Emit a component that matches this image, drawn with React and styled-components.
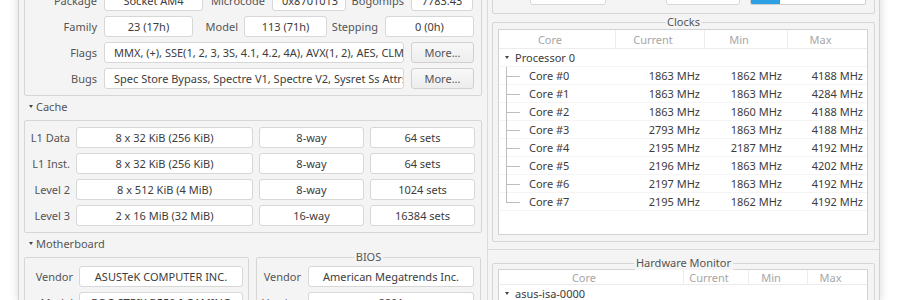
import React from "react";
import styled, { createGlobalStyle } from "styled-components";

const GlobalStyle = createGlobalStyle`
  html, body {
    margin: 0;
    padding: 0;
    background: #ffffff;
    overflow: hidden;
  }
  body {
    font-family: "Noto Sans", "Open Sans", sans-serif;
    font-size: 11px;
    color: #3c3c3c;
  }
  * {
    box-sizing: border-box;
  }
`;

const clocks = [
  ["Core #0", "1863 MHz", "1862 MHz", "4188 MHz"],
  ["Core #1", "1863 MHz", "1863 MHz", "4284 MHz"],
  ["Core #2", "1863 MHz", "1860 MHz", "4188 MHz"],
  ["Core #3", "2793 MHz", "1863 MHz", "4188 MHz"],
  ["Core #4", "2195 MHz", "2187 MHz", "4192 MHz"],
  ["Core #5", "2196 MHz", "1863 MHz", "4202 MHz"],
  ["Core #6", "2197 MHz", "1863 MHz", "4192 MHz"],
  ["Core #7", "2195 MHz", "1862 MHz", "4192 MHz"],
];

const cache = [
  ["L1 Data", "8 x 32 KiB (256 KiB)", "8-way", "64 sets"],
  ["L1 Inst.", "8 x 32 KiB (256 KiB)", "8-way", "64 sets"],
  ["Level 2", "8 x 512 KiB (4 MiB)", "8-way", "1024 sets"],
  ["Level 3", "2 x 16 MiB (32 MiB)", "16-way", "16384 sets"],
];

const clockCols = [116, 89, 83, 80];
const hwCols = [184, 65, 59, 60];

const Window = styled.div`
  margin: -38px 0 0 18px;
  width: 862px;
  height: 340px;
  background: #f4f4f4;
  border: 1px solid #d2d2d2;
  box-shadow: 0 0 9px rgba(0, 0, 0, 0.16);
  display: flex;
  align-items: flex-start;
`;

const LeftCol = styled.div`
  width: 468px;
  padding: 19px 5px 0 5px;
  display: flex;
  flex-direction: column;

  & > * {
    flex: none;
  }
`;

const RightCol = styled.div`
  width: 392px;
  align-self: stretch;
  border-left: 1px solid #dcdcdc;
  display: flex;
  flex-direction: column;

  & > * {
    flex: none;
  }
`;

const Section = styled.div`
  padding: ${(p) => p.$pad};
  border-bottom: ${(p) => (p.$line ? "1px solid #d8d8d8" : "none")};
  display: flex;
  flex-direction: column;

  & > * {
    flex: none;
  }
`;

const Frame = styled.div`
  position: relative;
  border: 1px solid #d6d6d6;
  border-radius: 2px;
  padding: ${(p) => p.$pad || "6px 0"};
  width: ${(p) => (p.$w ? `${p.$w}px` : "auto")};
  height: ${(p) => (p.$h ? `${p.$h}px` : "auto")};
  margin-top: ${(p) => p.$mt || 0}px;
  display: flex;
  flex-direction: column;
  gap: 5px;

  & > * {
    flex: none;
  }
`;

const FrameTitle = styled.span`
  position: absolute;
  top: -8px;
  left: 50%;
  transform: translateX(-50%);
  padding: 0 2px;
  background: #f4f4f4;
  color: #555;
  line-height: 14px;
  white-space: nowrap;
`;

const Row = styled.div`
  display: flex;
  align-items: center;
  gap: ${(p) => p.$gap || 0}px;
  height: 21px;
`;

const Label = styled.span`
  flex: none;
  width: ${(p) => p.$w}px;
  padding-right: ${(p) => p.$pr || 0}px;
  text-align: right;
  color: #555;
  white-space: nowrap;
`;

const Entry = styled.div`
  flex: none;
  width: ${(p) => p.$w}px;
  height: 21px;
  line-height: 19px;
  padding: 0 9px;
  background: #fff;
  border: 1px solid #d7d7d7;
  border-radius: 3px;
  text-align: ${(p) => p.$align || "center"};
  white-space: nowrap;
  overflow: hidden;
  color: #3c3c3c;
`;

const Button = styled.div`
  flex: none;
  width: 63px;
  height: 21px;
  margin-left: 7px;
  line-height: 19px;
  text-align: center;
  color: #555;
  border: 1px solid #d0d0d0;
  border-radius: 3px;
  background: linear-gradient(#f8f8f8, #ededed);
`;

const Expander = styled.div`
  height: 24px;
  padding: 0 0 3px 5px;
  display: flex;
  align-items: center;
  color: #555;
`;

const Arrow = styled.span`
  display: inline-block;
  flex: none;
  width: 0;
  height: 0;
  border-left: 2.5px solid transparent;
  border-right: 2.5px solid transparent;
  border-top: 3.5px solid #444;
  margin: 0 ${(p) => p.$mr || 3}px 0 ${(p) => p.$ml || 0}px;
`;

const FramePair = styled.div`
  display: flex;
  gap: 7px;
`;

const Bar = styled.div`
  flex: none;
  width: 116px;
  height: 21px;
  margin-left: 10px;
  background: #fff;
  border: 1px solid #d0d0d0;
  border-radius: 2px;
  overflow: hidden;
`;

const BarFill = styled.div`
  height: 100%;
  background: #2d9fe3;
`;

const Tree = styled.div`
  height: ${(p) => p.$h}px;
  margin: 0 6px 0 5px;
  background: #fff;
  border: 1px solid #d2d2d2;
  overflow: hidden;
`;

const HeadRow = styled.div`
  display: flex;
  height: ${(p) => p.$h}px;
  border-bottom: 1px solid #ececec;
`;

const HeadCell = styled.div`
  flex: none;
  width: ${(p) => p.$w}px;
  border-left: ${(p) => (p.$first ? "none" : "1px solid #ededed")};
  padding-right: ${(p) => p.$off}px;
  display: flex;
  align-items: center;
  justify-content: center;
  color: #a6a6a6;
`;

const TreeRow = styled.div`
  display: flex;
  align-items: center;
  height: 18px;
  border-bottom: 1px solid #f4f4f4;
`;

const NameCell = styled.div`
  flex: none;
  width: ${(p) => p.$w}px;
  display: flex;
  align-items: center;
  height: 100%;
  white-space: nowrap;
`;

const ValueCell = styled.div`
  flex: none;
  width: ${(p) => p.$w}px;
  padding-right: ${(p) => p.$pr}px;
  text-align: right;
  white-space: nowrap;
`;

const Guide = styled.span`
  flex: none;
  width: 15px;
  height: 18px;
  margin: 0 8px 0 7px;
  background:
    linear-gradient(#bdbdbd, #bdbdbd) 0 0 / 1px ${(p) => (p.$last ? "9px" : "18px")} no-repeat,
    linear-gradient(#bdbdbd, #bdbdbd) 0 9px / 14px 1px no-repeat;
`;

function ClockTable() {
  return (
    <Tree $h={206}>
      <HeadRow $h={19}>
        {["Core", "Current", "Min", "Max"].map((h, i) => (
          <HeadCell key={h} $w={clockCols[i]} $off={14} $first={i === 0}>
            {h}
          </HeadCell>
        ))}
      </HeadRow>
      <TreeRow>
        <NameCell $w={clockCols[0]}>
          <Arrow $ml={6} $mr={6} />
          Processor 0
        </NameCell>
      </TreeRow>
      {clocks.map((c, idx) => (
        <TreeRow key={c[0]}>
          <NameCell $w={clockCols[0]}>
            <Guide $last={idx === clocks.length - 1} />
            {c[0]}
          </NameCell>
          <ValueCell $w={clockCols[1]} $pr={4}>{c[1]}</ValueCell>
          <ValueCell $w={clockCols[2]} $pr={5}>{c[2]}</ValueCell>
          <ValueCell $w={clockCols[3]} $pr={4}>{c[3]}</ValueCell>
        </TreeRow>
      ))}
    </Tree>
  );
}

function HardwareTable() {
  return (
    <Tree $h={120}>
      <HeadRow $h={15}>
        {["Core", "Current", "Min", "Max"].map((h, i) => (
          <HeadCell key={h} $w={hwCols[i]} $off={14} $first={i === 0}>
            {h}
          </HeadCell>
        ))}
      </HeadRow>
      <TreeRow>
        <NameCell $w={hwCols[0]}>
          <Arrow $ml={6} $mr={6} />
          asus-isa-0000
        </NameCell>
      </TreeRow>
    </Tree>
  );
}

export default function App() {
  return (
    <>
      <GlobalStyle />
      <Window>
        <LeftCol>
          <Frame $pad="7px 0 6px 0">
            <Row>
              <Label $w={79} $pr={7}>Package</Label>
              <Entry $w={99}>Socket AM4</Entry>
              <Label $w={69} $pr={7}>Microcode</Label>
              <Entry $w={74}>0x8701013</Entry>
              <Label $w={65} $pr={7}>Bogomips</Label>
              <Entry $w={62}>7783.43</Entry>
            </Row>
            <Row>
              <Label $w={79} $pr={7}>Family</Label>
              <Entry $w={89}>23 (17h)</Entry>
              <Label $w={51} $pr={6}>Model</Label>
              <Entry $w={83}>113 (71h)</Entry>
              <Label $w={58} $pr={7}>Stepping</Label>
              <Entry $w={89}>0 (0h)</Entry>
            </Row>
            <Row>
              <Label $w={79} $pr={7}>Flags</Label>
              <Entry $w={300} $align="left">
                MMX, (+), SSE(1, 2, 3, 3S, 4.1, 4.2, 4A), AVX(1, 2), AES, CLMUL, VA, RdRand, SHA, SSE4A
              </Entry>
              <Button>More...</Button>
            </Row>
            <Row>
              <Label $w={79} $pr={7}>Bugs</Label>
              <Entry $w={300} $align="left">
                Spec Store Bypass, Spectre V1, Spectre V2, Sysret Ss Attrs
              </Entry>
              <Button>More...</Button>
            </Row>
          </Frame>

          <Expander>
            <Arrow />
            Cache
          </Expander>
          <Frame $pad="6px 0 6px 0">
            {cache.map((c) => (
              <Row key={c[0]} $gap={6}>
                <Label $w={45}>{c[0]}</Label>
                <Entry $w={177}>{c[1]}</Entry>
                <Entry $w={105}>{c[2]}</Entry>
                <Entry $w={105}>{c[3]}</Entry>
              </Row>
            ))}
          </Frame>

          <Expander>
            <Arrow />
            Motherboard
          </Expander>
          <FramePair>
            <Frame $w={225} $pad="8px 0 6px 0">
              <Row $gap={6}>
                <Label $w={48}>Vendor</Label>
                <Entry $w={164}>ASUSTeK COMPUTER INC.</Entry>
              </Row>
              <Row $gap={6}>
                <Label $w={48}>Model</Label>
                <Entry $w={164}>ROG STRIX B550-I GAMING</Entry>
              </Row>
            </Frame>
            <Frame $w={225} $pad="8px 0 6px 0">
              <FrameTitle>BIOS</FrameTitle>
              <Row $gap={7}>
                <Label $w={44}>Vendor</Label>
                <Entry $w={166}>American Megatrends Inc.</Entry>
              </Row>
              <Row $gap={7}>
                <Label $w={44}>Version</Label>
                <Entry $w={166}>2801</Entry>
              </Row>
            </Frame>
          </FramePair>
        </LeftCol>

        <RightCol>
          <Section $pad="6px 4px 7px 4px" $line>
            <Frame $h={45} $pad="14px 0 0 0">
              <Row>
                <Label $w={37} $pr={4}>Cores</Label>
                <Entry $w={76}>8</Entry>
                <Label $w={60} $pr={6}>Threads</Label>
                <Entry $w={74}>16</Entry>
                <Bar>
                  <BarFill style={{ width: `${(30 / 116) * 100}%` }} />
                </Bar>
              </Row>
            </Frame>
            <Frame $h={220} $mt={8} $pad="6px 0 0 0">
              <FrameTitle>Clocks</FrameTitle>
              <ClockTable />
            </Frame>
          </Section>
          <Section $pad="13px 4px 0 4px">
            <Frame $h={100} $pad="5px 0 0 0">
              <FrameTitle>Hardware Monitor</FrameTitle>
              <HardwareTable />
            </Frame>
          </Section>
        </RightCol>
      </Window>
    </>
  );
}
